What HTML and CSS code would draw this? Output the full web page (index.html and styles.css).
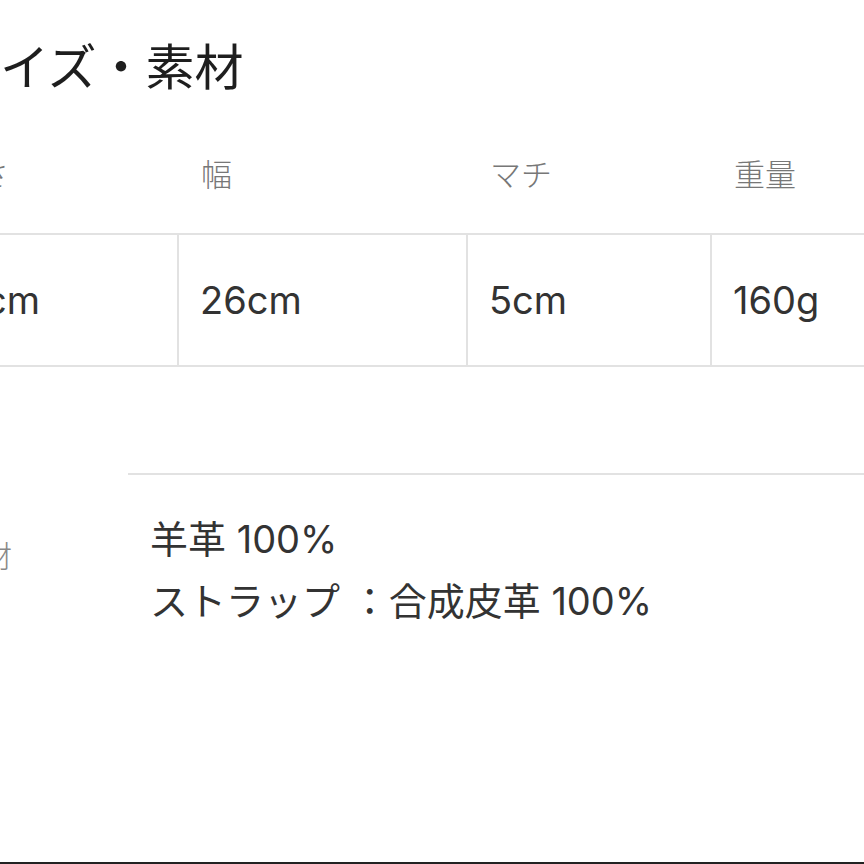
FILE: index.html
```html
<!DOCTYPE html>
<html lang="ja">
<head>
    <meta charset="UTF-8">
    <meta name="viewport" content="width=device-width, initial-scale=1.0">
    <title>サイズ・素材</title>
    <link rel="stylesheet" href="styles.css">
</head>

<body>
    <div class="sheet">
        <h2 class="title">サイズ・素材</h2>

        <table class="size-table">
            <colgroup>
                <col class="col-height">
                <col class="col-width">
                <col class="col-gusset">
                <col class="col-weight">
            </colgroup>
            <thead>
                <tr>
                    <th>高さ</th>
                    <th>幅</th>
                    <th>マチ</th>
                    <th>重量</th>
                </tr>
            </thead>
            <tbody>
                <tr>
                    <td>18cm</td>
                    <td>26cm</td>
                    <td>5cm</td>
                    <td>160g</td>
                </tr>
            </tbody>
        </table>

        <div class="materials">
            <div class="materials-label">素材</div>
            <div class="materials-body">
                <p>羊革 100%</p>
                <p>ストラップ ：合成皮革 100%</p>
            </div>
        </div>
    </div>

    <div class="screen-edge"></div>
</body>
</html>
```

FILE: styles.css
```css
html, body {
    height: 864px;
}

body {
    margin: 0;
    background-color: #fff;
    overflow: hidden;
    display: flex;
    flex-direction: column;
    font-family: Inter, "Noto Sans CJK JP", sans-serif;
    color: #333;
}

/* 左側が切れている画面なので、全体を左へずらす */
.sheet {
    margin-left: -77px;
    width: 1100px;
}

.title {
    margin: 0;
    padding: 36px 0 0 28px;
    font-family: "Noto Sans CJK JP", sans-serif;
    font-size: 49px;
    font-weight: 400;
    line-height: 56px;
    color: #1e1e1e;
}

.size-table {
    margin-top: 44px;
    width: 1037px;
    table-layout: fixed;
    border-collapse: collapse;
}

.col-height { width: 254px; }
.col-width  { width: 289px; }
.col-gusset { width: 244px; }
.col-weight { width: 250px; }

.size-table th {
    padding: 17px 22px 40px 23px;
    text-align: left;
    font-family: "Noto Sans CJK JP", sans-serif;
    font-size: 31px;
    font-weight: 300;
    line-height: 40px;
    color: #777;
}

.size-table td {
    padding: 40px 22px 40px 21px;
    border: 2px solid #e2e2e2;
    font-size: 38px;
    line-height: 50px;
    color: #333;
}

.materials {
    margin-top: 106px;
    display: grid;
    grid-template-columns: 205px 1fr;
}

.materials-label {
    padding: 61px 0 0 29px;
    font-family: "Noto Sans CJK JP", sans-serif;
    font-size: 30px;
    font-weight: 300;
    line-height: 40px;
    color: #888;
}

.materials-body {
    padding: 33px 22px;
    border-top: 2px solid #e2e2e2;
    font-size: 38px;
    line-height: 62px;
    color: #333;
}

.materials-body p {
    margin: 0;
}

.screen-edge {
    margin-top: auto;
    height: 2px;
    background-color: #222;
}
```
